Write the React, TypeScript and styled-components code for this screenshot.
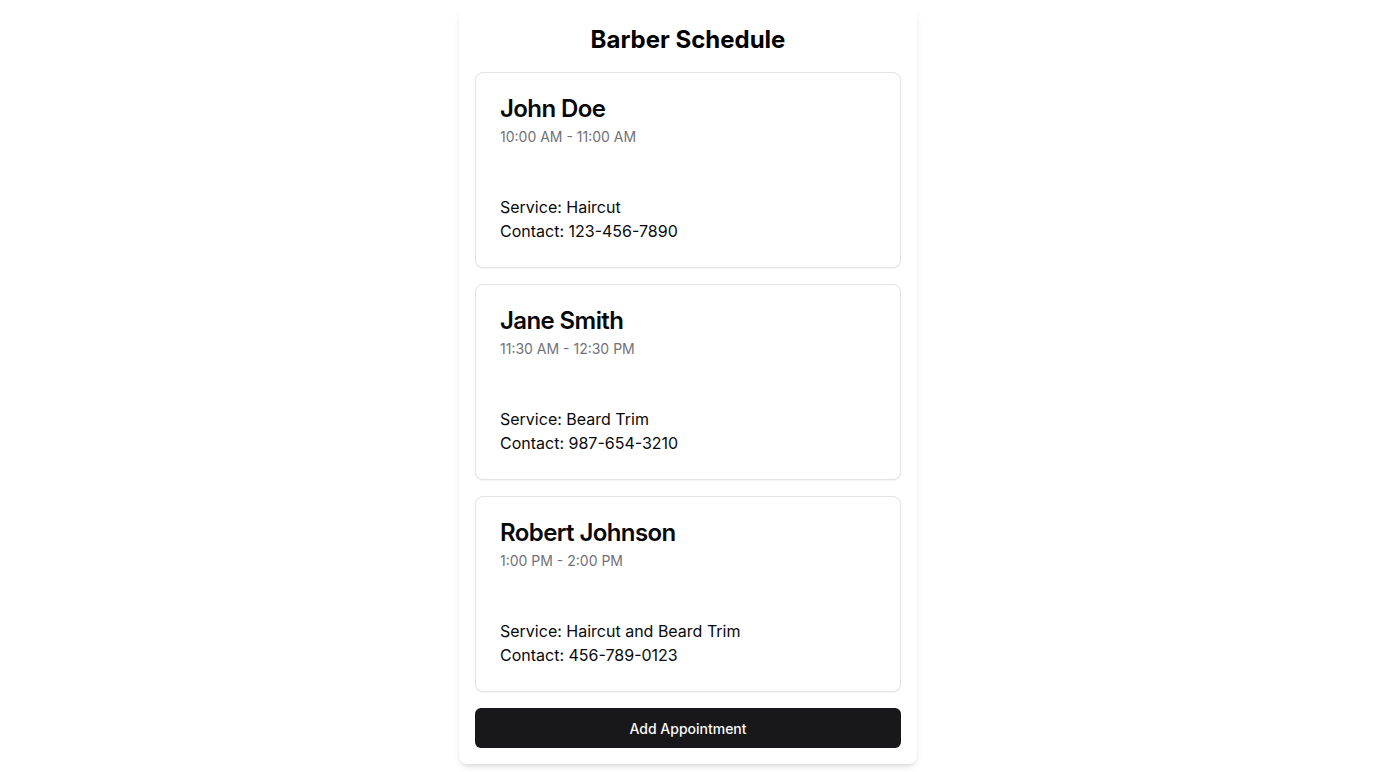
import React from "react";
import styled, { createGlobalStyle } from "styled-components";

const Global = createGlobalStyle`
  * { box-sizing: border-box; }
  html, body { margin: 0; padding: 0; background: #ffffff; }
  body { font-family: Inter, "Noto Sans", sans-serif; color: #09090b; }
`;

const Page = styled.div`
  min-height: 772px;
  display: flex;
  align-items: center;
  justify-content: center;
  padding: 8px 0;
`;

const Panel = styled.main`
  width: 458px;
  background: #ffffff;
  border-radius: 8px;
  box-shadow: 0 4px 6px -1px rgba(0, 0, 0, 0.1), 0 2px 4px -2px rgba(0, 0, 0, 0.1);
  padding: 16px;
  display: flex;
  flex-direction: column;
  gap: 16px;
`;

const Title = styled.h1`
  margin: 0;
  font-size: 24px;
  line-height: 32px;
  font-weight: 700;
  text-align: center;
  color: #000000;
`;

const Card = styled.section`
  border: 1px solid #e4e4e7;
  border-radius: 8px;
  background: #ffffff;
  box-shadow: 0 1px 2px 0 rgba(0, 0, 0, 0.05);
`;

const CardHeader = styled.div`
  padding: 24px;
  display: flex;
  flex-direction: column;
  gap: 6px;
`;

const Name = styled.h2`
  margin: 0;
  font-size: 24px;
  line-height: 24px;
  font-weight: 600;
  letter-spacing: -0.025em;
  color: #09090b;
`;

const Time = styled.p`
  margin: 0;
  font-size: 14px;
  line-height: 20px;
  color: #71717a;
`;

const CardContent = styled.div`
  padding: 24px;
`;

const Line = styled.p`
  margin: 0;
  font-size: 16px;
  line-height: 24px;
  color: #09090b;
`;

const Button = styled.button`
  height: 40px;
  width: 100%;
  border: none;
  border-radius: 6px;
  background: #18181b;
  color: #fafafa;
  font-family: Inter, "Noto Sans", sans-serif;
  font-size: 14px;
  font-weight: 500;
  cursor: pointer;
`;

const appointments = [
  { name: "John Doe", time: "10:00 AM - 11:00 AM", service: "Haircut", contact: "123-456-7890" },
  { name: "Jane Smith", time: "11:30 AM - 12:30 PM", service: "Beard Trim", contact: "987-654-3210" },
  { name: "Robert Johnson", time: "1:00 PM - 2:00 PM", service: "Haircut and Beard Trim", contact: "456-789-0123" },
];

export default function App() {
  return (
    <>
      <Global />
      <Page>
        <Panel>
          <Title>Barber Schedule</Title>
          {appointments.map((a) => (
            <Card key={a.name}>
              <CardHeader>
                <Name>{a.name}</Name>
                <Time>{a.time}</Time>
              </CardHeader>
              <CardContent>
                <Line>Service: {a.service}</Line>
                <Line>Contact: {a.contact}</Line>
              </CardContent>
            </Card>
          ))}
          <Button>Add Appointment</Button>
        </Panel>
      </Page>
    </>
  );
}
